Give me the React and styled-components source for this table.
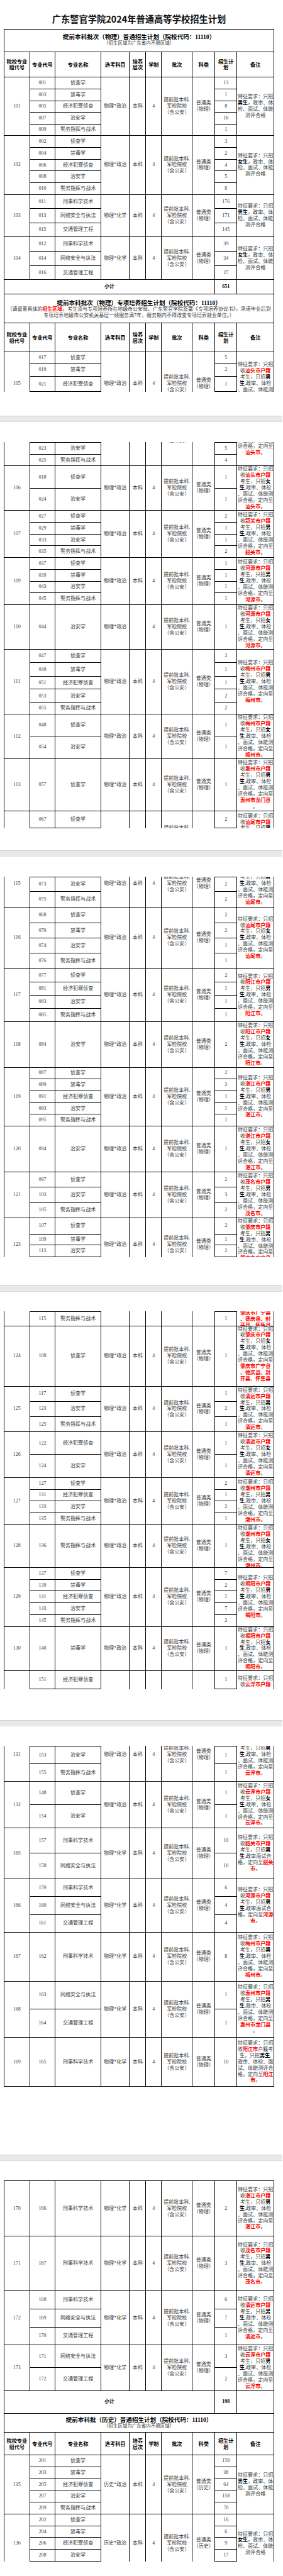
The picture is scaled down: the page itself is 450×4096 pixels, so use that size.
import React from 'react';
import styled, { createGlobalStyle } from 'styled-components';

const GlobalStyle = createGlobalStyle`
  html, body {
    margin: 0;
    padding: 0;
    background: #fff;
    overflow: hidden;
  }
  body {
    font-family: "Liberation Serif", "Noto Sans CJK SC", serif;
  }
`;

// column widths of the plan table (original pixel units, whole page is zoomed)
const COLS = '67px 67px 120px 75px 43px 41px 81px 59px 58px 97px';
const LINE = '1.5px solid #000';
const CJK = '"Liberation Serif", "Noto Sans CJK SC", serif';
const LH = 16.4;

const Viewer = styled.div`
  width: 741px;
  zoom: 0.606;
  background: #fff;
`;

const Page = styled.section`
  height: ${p => p.$h}px;
  padding: ${p => p.$top}px 0 0 10px;
  box-sizing: border-box;
  background: #fff;
  overflow: hidden;
`;

const PageGap = styled.div`
  height: 16.8px;
  box-sizing: border-box;
  background: #ebe9e7;
  border-top: 1.5px solid #d2d0ce;
  border-bottom: 1px solid #dddbd9;
`;

const DocTitle = styled.h1`
  margin: 0 0 13.7px;
  width: 709.5px;
  text-align: center;
  font: 700 23.6px/25px "Noto Sans CJK SC", sans-serif;
  color: #111;
  white-space: nowrap;
`;

const Window = styled.div`
  width: 708px;
  height: ${p => p.$h}px;
  overflow: hidden;
  border-left: ${LINE};
  border-top: ${p => (p.$first ? '1.5px solid #000' : 'none')};
`;

const Strip = styled.div`
  margin-top: -${p => p.$shift}px;
`;

const SectionBox = styled.div`
  height: ${p => p.$h}px;
  box-sizing: border-box;
  padding-top: ${p => p.$pt || 0}px;
  border-right: ${LINE};
  border-bottom: ${LINE};
  display: flex;
  flex-direction: column;
  align-items: center;
  justify-content: center;
  overflow: hidden;
`;

const SectionTitle = styled.div`
  height: 17.3px;
  font: 700 15.8px/17.3px ${CJK};
  color: #000;
  white-space: nowrap;
`;

const SectionNote = styled.div`
  height: ${p => (p.$big ? 16.2 : 16.5)}px;
  font-size: ${p => (p.$big ? 13.2 : 12.4)}px;
  line-height: ${p => (p.$big ? 16.2 : 16.5)}px;
  color: #3a3a3a;
  white-space: nowrap;
`;

const RowGrid = styled.div`
  display: grid;
  grid-template-columns: ${COLS};
  grid-template-rows: ${p => p.$rows};
`;

const Cell = styled.div`
  grid-column: ${p => p.$col};
  grid-row: ${p => (p.$span ? '1 / -1' : p.$row)};
  box-sizing: border-box;
  min-width: 0;
  min-height: 0;
  border-right: ${LINE};
  border-bottom: ${LINE};
  overflow: hidden;
  display: flex;
  flex-direction: column;
  align-items: center;
  justify-content: center;
  justify-content: safe center;
  text-align: center;
  font-size: 13.3px;
  line-height: ${LH}px;
  color: #3a3a3a;
`;

const HeadCell = styled(Cell)`
  font: 700 13.5px/15.5px "Noto Sans CJK SC", sans-serif;
  color: #000;
`;

const TotalCell = styled(Cell)`
  font: 700 13.3px/16.4px ${CJK};
  color: #000;
`;

const Line = styled.div`
  height: ${p => p.$h || LH}px;
  white-space: nowrap;
  flex-shrink: 0;
  visibility: ${p => (p.$hide ? 'hidden' : 'visible')};
`;

const Red = styled.b`
  color: #f00;
  font-weight: 700;
`;

const Strong = styled.b`
  color: #000;
  font-weight: 700;
`;

// [text] = red bold, {text} = black bold
const Rich = ({ text }) =>
  text
    .split(/(\[[^\]]*\]|\{[^}]*\})/)
    .filter(Boolean)
    .map((part, i) => {
      if (part[0] === '[') return <Red key={i}>{part.slice(1, -1)}</Red>;
      if (part[0] === '{') return <Strong key={i}>{part.slice(1, -1)}</Strong>;
      return <React.Fragment key={i}>{part}</React.Fragment>;
    });

const gen = sex => ['特征要求：只招', `{${sex}生}，政审、体`, '检、面试、体能', '测评合格'];
const sp = (city, sex) => [
  '特征要求：只招',
  `收[${city}市户籍]`,
  `考生，只招{${sex}}`,
  '{生},政审、体检',
  '、面试、体能测',
  '评合格，定向至',
  `[${city}市]。`,
];
const hz = sex => [...sp('惠州', sex).slice(0, 6), '[惠州市龙门县]', '。'];
const zq = sex => [...sp('肇庆', sex).slice(0, 6), '[肇庆市广宁县]', '[、德庆县、封]', '[开县、怀集县]', '。'];
const short = city => [
  '特征要求：只招',
  `收[${city}市户籍]`,
  '考生，只招{男}',
  '{生},政审面试合',
  `格，定向至[${city}]`,
  '[市]。',
];
const yj = ['特征要求：只招', '收[阳江市]户籍考', '生，只招{男生},', '政审、体检、面', '试、体能测评合', '格，定向至[阳江]', '[市]。'];

const PZ = '物理*政治';
const PH = '物理*化学';
const HZ = '历史*政治';

const g = (id, subj, note, rows, extra = {}) => ({ kind: 'group', id, subj, note, rows, cat: '（物理）', ...extra });

const HEAD = ['院校专业|组代号', '专业代号', '专业名称', '选考科目', '培养|层次', '学制', '批次', '科类', '招生计|划', '备注'];

const BLOCKS = [
  { kind: 'section', h: 59, title: '提前本科批次（物理）普通招生计划（院校代码：11110）', lines: ['（招生区域为广东省内不限区域）'] },
  { kind: 'header', h: 66.7 },
  g('101', PZ, gen('男'), [['001', '侦查学', 13, 30.6], ['003', '禁毒学', 1, 31.4], ['005', '经济犯罪侦查', 8, 29.9], ['007', '治安学', 16, 31.3], ['009', '警务指挥与战术', 1, 30.7]]),
  g('102', PZ, gen('女'), [['002', '侦查学', 3, 30.9], ['004', '禁毒学', 2, 31], ['006', '经济犯罪侦查', 4, 30.7], ['008', '治安学', 5, 31], ['010', '警务指挥与战术', 6, 30.6]]),
  g('103', PH, gen('男'), [['011', '刑事科学技术', 176, 37.5], ['013', '网络安全与执法', 171, 36.7], ['015', '交通管理工程', 145, 37.5]]),
  g('104', PH, gen('女'), [['012', '刑事科学技术', 39, 38.2], ['014', '网络安全与执法', 34, 36.8], ['016', '交通管理工程', 27, 37.4]]),
  { kind: 'total', h: 37.2, value: 651 },
  {
    kind: 'section', h: 76, pt: 4, big: true,
    title: '提前本科批次（物理）专项培养招生计划（院校代码：11110）',
    lines: [
      '（请留意具体的[招生区域]，考生须与专项培养所在地级市公安局、广东警官学院签署《专项培养协议书》，承诺毕业后到',
      '专项培养地级市公安机关基层一线服务满7年，服务期内不得改变专项培养就业单位。）',
    ],
  },
  { kind: 'header', h: 76.4 },
  g('105', PZ, sp('汕头', '男'), [['017', '侦查学', 5, 29.2], ['019', '禁毒学', 2, 34.9], ['021', '经济犯罪侦查', 1, 39.7], ['023', '治安学', 5, 31.4], ['025', '警务指挥与战术', 4, 31]]),
  g('106', PZ, sp('汕头', '女'), [['018', '侦查学', 1, 58.4], ['024', '治安学', 1, 58.3]]),
  g('107', PZ, sp('韶关', '男'), [['027', '侦查学', 2, 31], ['029', '禁毒学', 1, 31.4], ['033', '治安学', 1, 30.6], ['035', '警务指挥与战术', 2, 31.4]]),
  g('109', PZ, sp('河源', '男'), [['037', '侦查学', 1, 31], ['039', '禁毒学', 1, 30.2], ['043', '治安学', 1, 31], ['045', '警务指挥与战术', 1, 30.6]]),
  g('110', PZ, sp('河源', '女'), [['044', '治安学', 1, 118.2]], { noLevel: true }),
  g('111', PZ, sp('梅州', '男'), [['047', '侦查学', 2, 34.6], ['049', '禁毒学', 1, 35], ['051', '经济犯罪侦查', 1, 34.2], ['053', '治安学', 2, 35.3], ['055', '警务指挥与战术', 2, 29.9]]),
  g('112', PZ, sp('梅州', '女'), [['048', '侦查学', 1, 57.4], ['054', '治安学', 1, 59.4]]),
  g('113', PZ, hz('男'), [['057', '侦查学', 1, 137.3]]),
  g('115', PZ, sp('汕尾', '男'), [['067', '侦查学', 2, 45.4], ['073', '治安学', 2, 38.5], ['075', '警务指挥与战术', 2, 41.8]]),
  g('116', PZ, sp('汕尾', '女'), [['068', '侦查学', 2, 40.4], ['070', '禁毒学', 2, 40], ['074', '治安学', 1, 40], ['076', '警务指挥与战术', 1, 39.6]]),
  g('117', PZ, sp('阳江', '男'), [['077', '侦查学', 2, 35.3], ['081', '经济犯罪侦查', 1, 35], ['083', '治安学', 1, 35.3], ['085', '警务指挥与战术', 1, 34.6]]),
  g('118', PZ, sp('阳江', '女'), [['084', '治安学', 2, 119.3]]),
  g('119', PZ, sp('湛江', '男'), [['087', '侦查学', 2, 30.6], ['089', '禁毒学', 2, 31], ['091', '经济犯罪侦查', 1, 31], ['093', '治安学', 1, 31], ['095', '警务指挥与战术', 1, 30.3]]),
  g('120', PZ, sp('湛江', '女'), [['094', '治安学', 1, 121]]),
  g('121', PZ, sp('茂名', '男'), [['097', '侦查学', 2, 40], ['103', '治安学', 3, 40], ['105', '警务指挥与战术', 2, 40]]),
  g('123', PZ, zq('男'), [['107', '侦查学', 2, 43.3], ['109', '禁毒学', 1, 28.8], ['113', '治安学', 2, 30.3], ['115', '警务指挥与战术', 1, 37.4]]),
  g('124', PZ, zq('女'), [['108', '侦查学', 1, 158.6]]),
  g('125', PZ, sp('清远', '男'), [['117', '侦查学', 1, 39.6], ['123', '治安学', 2, 40], ['125', '警务指挥与战术', 1, 40.4]]),
  g('126', PZ, sp('清远', '女'), [['122', '经济犯罪侦查', 1, 59.5], ['124', '治安学', 1, 60.1]]),
  g('127', PZ, sp('潮州', '男'), [['127', '侦查学', 2, 31], ['131', '经济犯罪侦查', 1, 31], ['133', '治安学', 2, 31], ['135', '警务指挥与战术', 1, 31]]),
  g('128', PZ, sp('潮州', '女'), [['136', '警务指挥与战术', 1, 112.1]]),
  g('129', PZ, sp('揭阳', '男'), [['137', '侦查学', 7, 31.3], ['139', '禁毒学', 2, 30.7], ['141', '经济犯罪侦查', 1, 30.9], ['143', '治安学', 7, 31], ['145', '警务指挥与战术', 2, 31]]),
  g('130', PZ, sp('揭阳', '女'), [['140', '禁毒学', 1, 116.1]]),
  g('131', PZ, sp('云浮', '男'), [['151', '经济犯罪侦查', 1, 47.5], ['153', '治安学', 1, 46.8], ['155', '警务指挥与战术', 1, 46.2]]),
  g('132', PZ, sp('云浮', '女'), [['148', '侦查学', 1, 60.9], ['154', '治安学', 1, 60.5]]),
  g('165', PH, short('韶关'), [['157', '刑事科学技术', 10, 66.7], ['158', '网络安全与执法', 10, 66.7]]),
  g('166', PH, short('河源'), [['159', '刑事科学技术', 6, 47.5], ['160', '网络安全与执法', 4, 46.9], ['161', '交通管理工程', 4, 46.1]]),
  g('167', PH, sp('梅州', '男'), [['162', '刑事科学技术', 8, 128.6]]),
  g('168', PH, hz('男'), [['163', '网络安全与执法', 1, 73.2], ['164', '交通管理工程', 1, 74.2]]),
  g('169', PH, yj, [['165', '刑事科学技术', 10, 129]]),
  g('170', PH, sp('湛江', '男'), [['166', '刑事科学技术', 2, 145.3]]),
  g('171', PH, sp('茂名', '男'), [['167', '刑事科学技术', 3, 144.1]]),
  g('172', PH, sp('清远', '男'), [['168', '刑事科学技术', 6, 47.6], ['169', '网络安全与执法', 7, 46.8], ['170', '交通管理工程', 1, 46.9]]),
  g('173', PH, sp('云浮', '男'), [['171', '网络安全与执法', 3, 59.8], ['172', '交通管理工程', 2, 59.7]]),
  { kind: 'total', h: 60.5, value: 198 },
  { kind: 'section', h: 49.2, pt: 2, title: '提前本科批（历史）普通招生计划（院校代码：11110）', lines: ['（招生区域为广东省内不限区域）'] },
  { kind: 'header', h: 59.8 },
  g('135', HZ, gen('男'), [['201', '侦查学', 158, 30.8], ['203', '禁毒学', 38, 31.2], ['205', '经济犯罪侦查', 64, 30.8], ['207', '治安学', 158, 31.1], ['209', '警务指挥与战术', 70, 30.8]], { cat: '（历史）' }),
  g('136', HZ, gen('女'), [['202', '侦查学', 16, 31.2], ['204', '禁毒学', 6, 30.8], ['206', '经济犯罪侦查', 9, 30.4], ['208', '治安学', 17, 31.6], ['210', '警务指挥与战术', '', 31]], { cat: '（历史）' }),
];

// lay the blocks out on one continuous strip, then cut it into pages
const rowEnd = {};
let cursor = 0;
const LAID = BLOCKS.map(b => {
  const h = b.kind === 'group' ? b.rows.reduce((s, r) => s + r[3], 0) : b.h;
  if (b.kind === 'group') {
    let ry = cursor;
    b.rows.forEach(r => {
      ry += r[3];
      rowEnd[r[0]] = ry;
    });
  }
  const out = { ...b, h, top: cursor };
  cursor += h;
  return out;
});

const CUTS = ['021', '067', '113', '151', '165', '208'].map(c => rowEnd[c]);
const PAGES = [
  { h: 1091, top: 37, title: true },
  { h: 1123.7, top: 51.8 },
  { h: 1123.7, top: 51.8 },
  { h: 1123.7, top: 51.8 },
  { h: 1123.7, top: 51.8 },
  { h: 1079.2, top: 51.8 },
].map((p, i) => ({ ...p, start: i === 0 ? 0 : CUTS[i - 1] - 1.5, end: CUTS[i] }));

const Group = ({ b, win }) => {
  const seen = (y0, y1) => y1 > win.start + 3 && y0 < win.end - 3;

  // a cell spanning the whole group: its lines sit centred, or from the top when they overflow
  const merged = (col, lines, rich) => {
    const off = Math.max(0, (b.h - lines.length * LH) / 2);
    return (
      <Cell $col={col} $span>
        {lines.map((l, k) => {
          const y = b.top + off + k * LH;
          return (
            <Line key={k} $hide={!seen(y, y + LH)}>
              {rich ? <Rich text={l} /> : l}
            </Line>
          );
        })}
      </Cell>
    );
  };

  let y = b.top;
  const rows = b.rows.map((r, i) => {
    const top = y;
    y += r[3];
    const hide = !seen(top, y);
    return (
      <React.Fragment key={r[0]}>
        <Cell $col={2} $row={i + 1}>
          <Line $hide={hide}>{r[0]}</Line>
        </Cell>
        <Cell $col={3} $row={i + 1}>
          <Line $hide={hide}>{r[1]}</Line>
        </Cell>
        <Cell $col={9} $row={i + 1}>
          <Line $hide={hide}>{r[2]}</Line>
        </Cell>
      </React.Fragment>
    );
  });

  return (
    <RowGrid $rows={b.rows.map(r => `${r[3]}px`).join(' ')}>
      {merged(1, [b.id])}
      {rows}
      {merged(4, [b.subj])}
      {merged(5, [b.noLevel ? '' : '本科'])}
      {merged(6, ['4'])}
      {merged(7, ['提前批本科.', '军检院校', '（含公安）'])}
      {merged(8, ['普通类', b.cat])}
      {merged(10, b.note, true)}
    </RowGrid>
  );
};

const Block = ({ b, win }) => {
  if (b.kind === 'section') {
    return (
      <SectionBox $h={b.h} $pt={b.pt}>
        <SectionTitle>{b.title}</SectionTitle>
        {b.lines.map(l => (
          <SectionNote key={l} $big={b.big}>
            <Rich text={l} />
          </SectionNote>
        ))}
      </SectionBox>
    );
  }
  if (b.kind === 'header') {
    return (
      <RowGrid $rows={`${b.h}px`}>
        {HEAD.map((t, i) => (
          <HeadCell key={t} $col={i + 1} $row={1}>
            {t.split('|').map(s => (
              <Line key={s} $h={15.5}>
                {s}
              </Line>
            ))}
          </HeadCell>
        ))}
      </RowGrid>
    );
  }
  if (b.kind === 'total') {
    return (
      <RowGrid $rows={`${b.h}px`}>
        <TotalCell $col="1 / 9" $row={1}>
          <Line>小计</Line>
        </TotalCell>
        <TotalCell $col={9} $row={1}>
          <Line>{b.value}</Line>
        </TotalCell>
        <TotalCell $col={10} $row={1} />
      </RowGrid>
    );
  }
  return <Group b={b} win={win} />;
};

const PageWindow = ({ page, first }) => {
  const shown = LAID.filter(b => b.top < page.end && b.top + b.h > page.start);
  const shift = page.start - shown[0].top;
  return (
    <Window $h={page.end - page.start} $first={first}>
      <Strip $shift={shift}>
        {shown.map((b, i) => (
          <Block key={i} b={b} win={page} />
        ))}
      </Strip>
    </Window>
  );
};

const App = () => (
  <>
    <GlobalStyle />
    <Viewer>
      {PAGES.map((p, i) => (
        <React.Fragment key={i}>
          {i > 0 && <PageGap />}
          <Page $h={p.h} $top={p.top}>
            {p.title && <DocTitle>广东警官学院2024年普通高等学校招生计划</DocTitle>}
            <PageWindow page={p} first={i === 0} />
          </Page>
        </React.Fragment>
      ))}
    </Viewer>
  </>
);

export default App;
